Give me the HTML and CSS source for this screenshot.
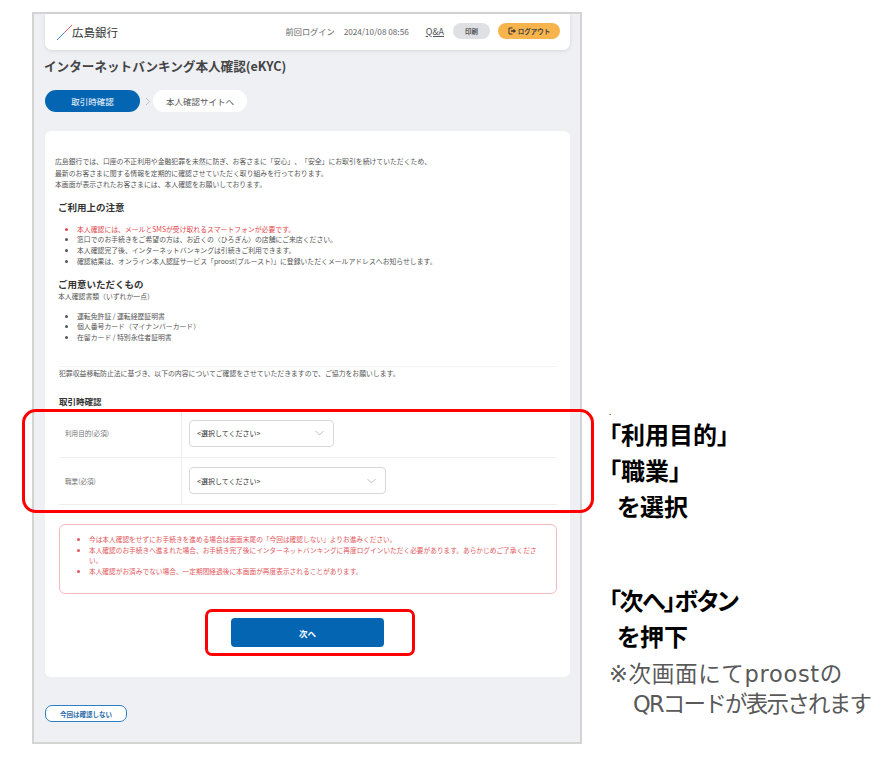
FILE: index.html
```html
<!DOCTYPE html>
<html lang="ja">
<head>
<meta charset="utf-8">
<title>インターネットバンキング本人確認(eKYC)</title>
<link rel="stylesheet" href="styles.css">
</head>
<body>
<div class="stage">
  <div class="frame">
    <header class="topbar">
      <div class="logo">
        <svg class="logo-mark" width="17" height="17" viewBox="0 0 17 17"><path d="M1 16L8.500 8.500" stroke="#3f7fc4" stroke-width="1" fill="none"/><path d="M8.500 8.500L16 1" stroke="#e0525c" stroke-width="1" fill="none"/></svg>
        <span class="logo-text">広島銀行</span>
      </div>
      <div class="top-right">
        <span class="last-label">前回ログイン</span>
        <span class="last-date">2024/10/08 08:56</span>
        <a class="qa">Q&amp;A</a>
        <span class="print">印刷</span>
        <span class="logout">
          <svg width="8" height="8" viewBox="0 0 8 8"><path d="M4.500 1H1v6h3.500" fill="none" stroke="#333" stroke-width="1"/><path d="M3 3.200h2.500V1.800L8 4 5.500 6.200V4.800H3z" fill="#333"/></svg>
          ログアウト
        </span>
      </div>
    </header>
    <h1 class="page-title">インターネットバンキング本人確認(eKYC)</h1>
    <div class="steps">
      <span class="step step-on">取引時確認</span>
      <svg class="step-arrow" width="6" height="9" viewBox="0 0 6 9"><path d="M1 1l3.500 3.500L1 8" fill="none" stroke="#b8bcc2" stroke-width="1"/></svg>
      <span class="step step-off">本人確認サイトへ</span>
    </div>
    <main class="card">
      <p class="intro">広島銀行では、口座の不正利用や金融犯罪を未然に防ぎ、お客さまに「安心」、「安全」にお取引を続けていただくため、<br>最新のお客さまに関する情報を定期的に確認させていただく取り組みを行っております。<br>本画面が表示されたお客さまには、本人確認をお願いしております。</p>
      <h2 class="sub first">ご利用上の注意</h2>
      <ul class="list">
        <li class="red">本人確認には、メールとSMSが受け取れるスマートフォンが必要です。</li>
        <li>窓口でのお手続きをご希望の方は、お近くの〈ひろぎん〉の店舗にご来店ください。</li>
        <li>本人確認完了後、インターネットバンキングは引続きご利用できます。</li>
        <li>確認結果は、オンライン本人認証サービス「proost(プルースト)」に登録いただくメールアドレスへお知らせします。</li>
      </ul>
      <h2 class="sub second">ご用意いただくもの</h2>
      <p class="doc-note">本人確認書類（いずれか一点）</p>
      <ul class="list docs">
        <li>運転免許証 / 運転経歴証明書</li>
        <li>個人番号カード（マイナンバーカード）</li>
        <li>在留カード / 特別永住者証明書</li>
      </ul>
      <p class="law">犯罪収益移転防止法に基づき、以下の内容についてご確認をさせていただきますので、ご協力をお願いします。</p>
      <h2 class="sub third">取引時確認</h2>
      <div class="form">
        <div class="row">
          <div class="label">利用目的(必須)</div>
          <div class="field">
            <div class="select select-a"><span>&lt;選択してください&gt;</span><svg width="9" height="6" viewBox="0 0 9 6"><path d="M.5 1l4 4 4-4" fill="none" stroke="#a9adb3" stroke-width=".8"/></svg></div>
          </div>
        </div>
        <div class="row">
          <div class="label">職業(必須)</div>
          <div class="field">
            <div class="select select-b"><span>&lt;選択してください&gt;</span><svg width="9" height="6" viewBox="0 0 9 6"><path d="M.5 1l4 4 4-4" fill="none" stroke="#a9adb3" stroke-width=".8"/></svg></div>
          </div>
        </div>
      </div>
      <div class="alert">
        <ul>
          <li>今は本人確認をせずにお手続きを進める場合は画面末尾の「今回は確認しない」よりお進みください。</li>
          <li>本人確認のお手続きへ進まれた場合、お手続き完了後にインターネットバンキングに再度ログインいただく必要があります。あらかじめご了承ください。</li>
          <li>本人確認がお済みでない場合、一定期間経過後に本画面が再度表示されることがあります。</li>
        </ul>
      </div>
      <div class="next-wrap"><button class="next">次へ</button></div>
    </main>
    <button class="skip">今回は確認しない</button>
  </div>
  <aside class="notes">
    <div class="dot">.</div>
    <p class="note">「利用目的」</p>
    <p class="note">「職業」</p>
    <p class="note ind">を選択</p>
    <p class="note gap">「次へ」ボタン</p>
    <p class="note ind">を押下</p>
    <p class="hint hint-first">※次画面にてproostの</p>
    <p class="hint ind2">QRコードが表示されます</p>
  </aside>
  <div class="mark mark-form"></div>
  <div class="mark mark-next"></div>
</div>
</body>
</html>
```

FILE: styles.css
```css
* { box-sizing: border-box; }
html, body { margin: 0; padding: 0; background: #fff; }
body { font-family: "Noto Sans CJK JP", "Noto Sans", sans-serif; color: #333; width: 880px; height: 760px; overflow: hidden; text-spacing-trim: space-all; }
p, h1, h2, ul { margin: 0; padding: 0; }

.stage { position: relative; display: flex; align-items: flex-start; padding: 12px 0 0 32px; }
.frame { width: 550px; height: 732px; background: #eff0f4; border: 2px solid #d4d4d4; padding: 0 10px 0 11px; flex: none; }

.topbar { height: 36px; background: #fff; border-radius: 0 0 7px 7px; box-shadow: 0 1px 4px rgba(0,0,0,.1); display: flex; justify-content: space-between; align-items: center; padding: 0 10px 2px 11px; }
.logo { display: flex; align-items: center; margin-top: 2px; }
.logo-mark { margin-right: -1px; }
.logo-text { font-size: 11.500px; color: #333; }
.top-right { display: flex; align-items: center; font-size: 8.200px; color: #666; }
.last-date { margin-left: 9px; }
.qa { margin-left: 17px; text-decoration: underline; color: #555; font-size: 9px; }
.print { margin-left: 9px; width: 37px; height: 16px; border-radius: 8px; background: #dfe0e4; font-size: 6.500px; font-weight: 700; color: #555; display: flex; align-items: center; justify-content: center; }
.logout { margin-left: 8px; width: 62px; height: 16px; border-radius: 8px; background: #f8b44c; font-size: 6.500px; font-weight: 700; color: #444; display: flex; align-items: center; justify-content: center; gap: 2px; }

.page-title { font-size: 12.600px; line-height: 18px; font-weight: 700; color: #444; margin: 7px 0 0 -1px; }

.steps { display: flex; align-items: center; margin-top: 15px; }
.step { height: 22px; border-radius: 11px; display: flex; align-items: center; justify-content: center; font-size: 8.500px; }
.step-on { width: 95px; background: #0466b3; color: #fff; }
.step-arrow { margin: 0 2px 0 5px; }
.step-off { width: 94px; background: #fff; color: #555; }

.card { height: 546px; margin-top: 19px; background: #fff; border-radius: 6px; padding: 25px 13px 0 10px; font-size: 6.850px; color: #555; }
.intro { line-height: 11.500px; }
.sub { font-size: 9.500px; line-height: 14px; font-weight: 700; color: #333; }
.first { margin: 9px 0 0 3px; }
.list { list-style: disc; padding-left: 22px; margin-top: 10px; line-height: 10.800px; }
.red { color: #e2474c; }
.second { margin: 10px 0 0 3px; }
.doc-note { margin: 0 0 0 3px; line-height: 11px; }
.docs { margin-top: 9px; }
.law { margin: 23px 0 0 4px; padding-top: 1px; border-top: 1px solid #f4f4f4; line-height: 11px; }
.third { margin: 16px 0 0 4px; font-size: 8.500px; line-height: 12px; }

.form { margin: 3px 0 0 4px; }
.row { display: flex; height: 47.500px; border-bottom: 1px solid #eceef0; }
.label { width: 123px; padding-left: 6px; border-right: 1px solid #eceef0; display: flex; align-items: center; font-size: 6.600px; color: #777; }
.field { flex: 1; padding-left: 7px; display: flex; align-items: center; }
.select { height: 27px; border: 1px solid #d6d8dc; border-radius: 4px; display: flex; justify-content: space-between; align-items: center; font-size: 7px; color: #333; padding: 0 9px 0 7px; }
.select-a { width: 145px; }
.select-b { width: 197px; }

.alert { height: 70px; margin: 19px 0 0 4px; width: 498px; border: 1px solid #f5b9bd; border-radius: 6px; padding: 9px 12px 0 0; font-size: 6.700px; line-height: 10.700px; color: #e2575c; }
.alert ul { list-style: disc; padding-left: 29px; }

.next-wrap { display: flex; justify-content: center; margin-top: 24px; padding-left: 3px; }
.next { width: 153px; height: 29px; border: 0; background: #0466b3; border-radius: 4px; color: #fff; font: 700 8.500px "Noto Sans CJK JP", sans-serif; padding: 0; }

.skip { display: block; width: 82px; height: 17px; margin-top: 28px; background: #fff; border: 1px solid #2c7fc4; border-radius: 7px; color: #2a6aa8; font: 700 6.500px "Noto Sans CJK JP", sans-serif; padding: 0; }

.notes { margin-left: 27px; font-family: "Noto Sans CJK JP", sans-serif; color: #000; }
.dot { font-size: 8px; line-height: 8px; margin-top: 396px; }
.note { font-size: 24px; font-weight: 700; line-height: 36px; font-feature-settings: "palt"; white-space: nowrap; }
.note.ind { padding-left: 8px; }
.note.gap { margin-top: 58px; letter-spacing: -1.500px; }
.hint { font-size: 22.500px; line-height: 30px; color: #595959; font-family: "DejaVu Sans", "Noto Sans CJK JP", sans-serif; white-space: nowrap; }
.hint-first { margin-top: 5px; letter-spacing: .7px; }
.ind2 { padding-left: 24px; letter-spacing: -1.750px; }

.mark { position: absolute; border: 3px solid #f00; }
.mark-form { left: 22px; top: 409px; width: 572px; height: 104px; border-radius: 14px; }
.mark-next { left: 205px; top: 609px; width: 210px; height: 47px; border-radius: 7px; }
```
